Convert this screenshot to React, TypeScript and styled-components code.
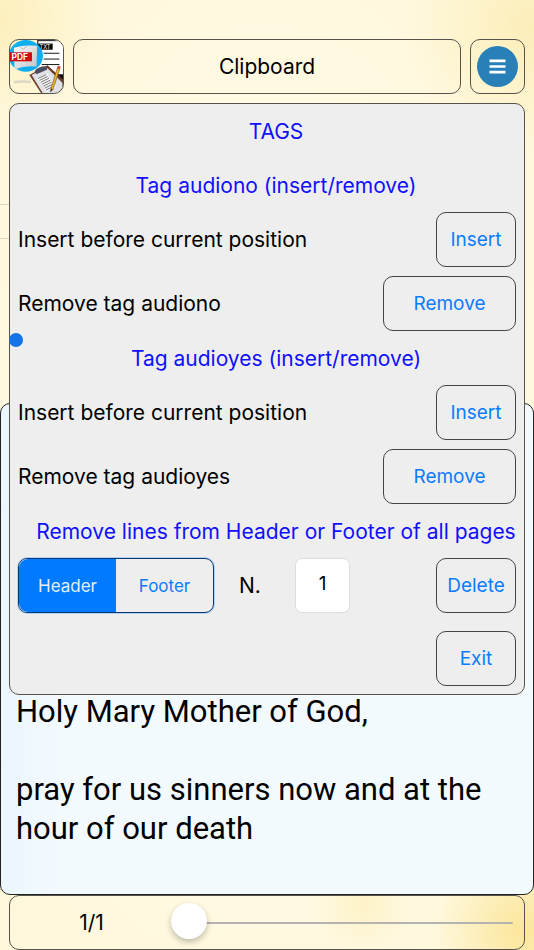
import React, { useState } from "react";
import styled, { createGlobalStyle } from "styled-components";

const GlobalStyle = createGlobalStyle`
  *, *::before, *::after { box-sizing: border-box; }
  body { margin: 0; }
  body, button, input { font-family: Inter, "Liberation Sans", sans-serif; }
`;

const Page = styled.div`
  min-height: 100vh;
  padding-top: 39px;
  display: flex;
  flex-direction: column;
  color: #000;
  background:
    radial-gradient(circle at 98% 98%, rgba(250, 222, 125, 0.7), transparent 90px),
    radial-gradient(circle at 68% 95%, rgba(250, 225, 140, 0.3), transparent 50px),
    radial-gradient(circle at 100% 3%, rgba(250, 228, 150, 0.5), transparent 130px),
    radial-gradient(circle at 0% 2%, rgba(252, 232, 160, 0.5), transparent 110px),
    radial-gradient(ellipse at 50% 50%, #fffbea 0%, #fff9e2 60%, #fef7da 100%);
`;

const Header = styled.header`
  display: flex;
  gap: 9px;
  padding: 0 9px;
`;

const Title = styled.h1`
  flex: 1;
  height: 55px;
  margin: 0;
  display: flex;
  align-items: center;
  justify-content: center;
  border: 1px solid #55534c;
  border-radius: 10px;
  font-size: 21px;
  font-weight: 400;
`;

const IconButton = styled.button`
  width: 55px;
  height: 55px;
  padding: 0;
  display: flex;
  align-items: center;
  justify-content: center;
  overflow: hidden;
  background: transparent;
  border: 1px solid #55534c;
  border-radius: 10px;
`;

const Workspace = styled.main`
  flex: 1;
  display: grid;
  grid-template-columns: 1fr 1fr;
  grid-template-rows: 309px 1fr;
`;

const HiddenField = styled.div`
  grid-area: 1 / 1;
  height: 35px;
  margin-top: 110px;
  border: solid #dcd8c6;
  border-width: 1px 0;
`;

const Reader = styled.article`
  grid-area: 2 / 1 / 3 / 3;
  display: flex;
  flex-direction: column;
  justify-content: flex-end;
  padding: 0 15px 46px;
  border: 1px solid #222;
  border-radius: 10px;
  background: linear-gradient(90deg, #eaf6fd, #f3fafe 12%, #f3fafe);
  font-family: Roboto, "Liberation Sans", sans-serif;
  font-size: 31px;
  line-height: 39px;
`;

const Verse = styled.p`
  margin: 0;
  & + & { margin-top: 39px; }
`;

const Panel = styled.section`
  grid-area: 1 / 1 / 3 / 3;
  align-self: start;
  position: relative;
  margin: 9px 9px 0;
  padding: 0 8px 8px;
  background: #eee;
  border: 1px solid #55534c;
  border-radius: 10px;
  font-size: 21px;
`;

const Heading = styled.h2`
  height: 54px;
  margin: 0;
  padding-left: 18px;
  display: flex;
  align-items: center;
  justify-content: center;
  color: #1010ff;
  font-size: 21px;
  font-weight: 400;
  white-space: nowrap;
`;

const Row = styled.div<{ $gap?: number }>`
  display: flex;
  align-items: center;
  justify-content: space-between;
  margin-top: ${(p) => p.$gap ?? 0}px;
`;

const ActionButton = styled.button<{ $wide?: boolean }>`
  width: ${(p) => (p.$wide ? 133 : 80)}px;
  height: 55px;
  margin-left: auto;
  padding: 0;
  color: #0a7cff;
  background: transparent;
  border: 1px solid #444;
  border-radius: 10px;
  font-size: 19px;
`;

const SelectionHandle = styled.span`
  position: absolute;
  left: -1px;
  top: 229px;
  width: 14px;
  height: 14px;
  border-radius: 50%;
  background: #1473e6;
`;

const Segmented = styled.fieldset`
  width: 196px;
  height: 55px;
  margin: 0;
  padding: 0;
  display: flex;
  overflow: hidden;
  border: 1px solid #06396f;
  border-radius: 9px;
  box-shadow: 0 0 0 1px #5aa8ff66;
`;

const Segment = styled.label`
  flex: 1;
  display: flex;
  align-items: center;
  justify-content: center;
  color: #0a7cff;
  font-size: 17px;
  &:has(input:checked) {
    background: #007aff;
    color: #e4f0fd;
  }
`;

const SegmentInput = styled.input`
  appearance: none;
  width: 0;
  height: 0;
  margin: 0;
`;

const CountLabel = styled.label`
  width: 81px;
  padding-left: 25px;
`;

const CountInput = styled.input`
  width: 55px;
  height: 55px;
  padding: 0 0 4px;
  text-align: center;
  background: #fff;
  border: 1px solid #ddd;
  border-radius: 7px;
  font-size: 19px;
`;

const Footer = styled.footer`
  height: 55px;
  margin: 0 9px;
  padding: 0 11px 0 0;
  display: flex;
  align-items: center;
  border: 1px solid #55534c;
  border-radius: 10px;
`;

const PageCount = styled.output`
  width: 161px;
  padding-left: 2px;
  text-align: center;
  font-size: 21px;
`;

const Slider = styled.input`
  flex: 1;
  min-width: 0;
  height: 36px;
  margin: 0;
  appearance: none;
  background: transparent;
  &::-webkit-slider-runnable-track {
    height: 2px;
    border-radius: 1px;
    background: #b4b3b2;
  }
  &::-webkit-slider-thumb {
    appearance: none;
    width: 36px;
    height: 36px;
    margin-top: -19px;
    border-radius: 50%;
    background: #fff;
    box-shadow: 0 3px 6px rgba(0, 0, 0, 0.25);
  }
`;

const LogoIcon = () => (
  <svg width="53" height="53" viewBox="0 0 164 164" aria-hidden="true">
    <defs>
      <linearGradient id="sheet" x1="0" y1="0" x2="1" y2="1">
        <stop offset="0" stopColor="#fafafa" />
        <stop offset="1" stopColor="#bfc3c8" />
      </linearGradient>
    </defs>
    <path d="M87 0H164V118H87Z" fill="#fff" />
    <path d="M86 0V26M86 2H156M104 41H153M104 59H153M98 76H153" stroke="#111" strokeWidth="3" />
    <rect x="87" y="11" width="45" height="19" fill="#080808" />
    <text x="91" y="27" fontSize="18" fill="#e8e8e8" fontFamily="Inter, sans-serif">TXT</text>
    <ellipse cx="49" cy="49" rx="53" ry="49" fill="#0eaeef" />
    <path d="M12 24Q44 14 84 18L82 82Q46 78 14 91Z" fill="url(#sheet)" />
    <path d="M32 23L40 29L52 20" fill="none" stroke="#999" strokeWidth="2" />
    <rect x="0" y="38" width="68" height="28" fill="#d00c12" />
    <text x="5" y="61" fontSize="26" fontWeight="700" fill="#fff" fontFamily="Inter, sans-serif">PDF</text>
    <path d="M12 127Q32 122 66 126L64 134Q34 130 12 134Z" fill="#ddd8c6" />
    <path d="M148 106H164V124H150Z" fill="#111" />
    <path d="M60 108L116 78L164 122V164H96Z" fill="#6d3a26" />
    <path d="M67 108L113 84L162 132V164H101Z" fill="#dfe1e7" />
    <path d="M83 118L116 102L144 145L112 162Z" fill="#f4f4f4" />
    <path d="M87 119L112 107M91 125L116 113M95 131L121 118M99 137L125 124M103 143L129 130M107 149L134 136M111 155L137 142" stroke="#777" strokeWidth="3" />
    <path d="M76 99Q79 88 93 84Q110 77 116 86L114 92L82 106Z" fill="#4b4e62" />
    <path d="M148 82L155 86L133 153L125 161L127 149Z" fill="#eeb52c" stroke="#795523" strokeWidth="2" />
    <path d="M149 79L157 83L154 92L146 88Z" fill="#cb5548" />
    <path d="M127 150L132 153L125 161Z" fill="#332a20" />
  </svg>
);

const MenuIcon = () => (
  <svg width="42" height="42" viewBox="0 0 42 42" aria-hidden="true">
    <circle cx="20.5" cy="20.5" r="20.5" fill="#2980b9" />
    <path d="M12.5 14.8H28.5M12.5 20.5H28.5M12.5 26.2H28.5" stroke="#fff" strokeWidth="2.7" />
  </svg>
);

function TagSection({ tag }: { tag: string }) {
  return (
    <>
      <Heading>Tag {tag} (insert/remove)</Heading>
      <Row>
        <span>Insert before current position</span>
        <ActionButton type="button">Insert</ActionButton>
      </Row>
      <Row $gap={9}>
        <span>Remove tag {tag}</span>
        <ActionButton type="button" $wide>Remove</ActionButton>
      </Row>
    </>
  );
}

export default function App() {
  const [area, setArea] = useState("Header");
  const [count, setCount] = useState("1");

  return (
    <>
      <GlobalStyle />
      <Page>
        <Header>
          <IconButton type="button" aria-label="Home"><LogoIcon /></IconButton>
          <Title>Clipboard</Title>
          <IconButton type="button" aria-label="Menu"><MenuIcon /></IconButton>
        </Header>
        <Workspace>
          <HiddenField />
          <Reader>
            <Verse>Holy Mary Mother of God,</Verse>
            <Verse>pray for us sinners now and at the hour of our death</Verse>
          </Reader>
          <Panel>
            <Heading>TAGS</Heading>
            <TagSection tag="audiono" />
            <TagSection tag="audioyes" />
            <Heading>Remove lines from Header or Footer of all pages</Heading>
            <Row>
              <Segmented aria-label="Area">
                {["Header", "Footer"].map((name) => (
                  <Segment key={name}>
                    <SegmentInput
                      type="radio"
                      name="area"
                      checked={area === name}
                      onChange={() => setArea(name)}
                    />
                    {name}
                  </Segment>
                ))}
              </Segmented>
              <CountLabel htmlFor="count">N.</CountLabel>
              <CountInput id="count" value={count} onChange={(e) => setCount(e.target.value)} />
              <ActionButton type="button">Delete</ActionButton>
            </Row>
            <Row $gap={18}>
              <ActionButton type="button">Exit</ActionButton>
            </Row>
            <SelectionHandle />
          </Panel>
        </Workspace>
        <Footer>
          <PageCount htmlFor="page">1/1</PageCount>
          <Slider id="page" type="range" min={1} max={10} defaultValue={1} aria-label="Page" />
        </Footer>
      </Page>
    </>
  );
}
